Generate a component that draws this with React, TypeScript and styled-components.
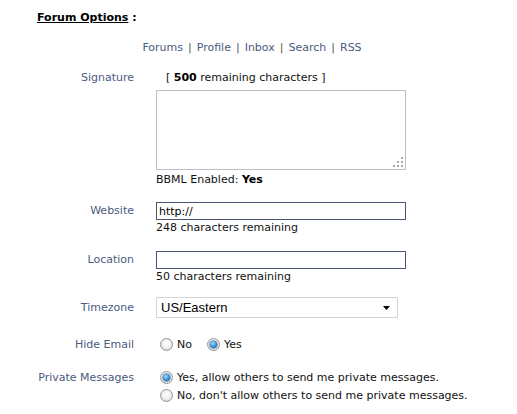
import React from "react";
import styled, { createGlobalStyle } from "styled-components";

const Global = createGlobalStyle`
  html, body { margin: 0; padding: 0; background: #fff; }
  body { font-family: "DejaVu Sans", Tahoma, Verdana, sans-serif; font-size: 11px; color: #111; }
`;

const Page = styled.div`
  width: 517px;
  padding-top: 10px;
`;

const Title = styled.div`
  padding-left: 37px;
  line-height: 15px;
  font-weight: bold;
  color: #000;
  span { text-decoration: underline; }
`;

const Nav = styled.nav`
  width: 504px;
  margin-top: 15px;
  line-height: 15px;
  text-align: center;
  color: #444;
`;

const NavLink = styled.a`
  color: #4b5a7e;
  text-decoration: none;
`;

const Sep = styled.span`
  color: #555;
  margin: 0 5px;
`;

const Row = styled.div<{ $top: number }>`
  display: flex;
  align-items: flex-start;
  column-gap: 22px;
  margin-top: ${(p) => p.$top}px;
`;

const Label = styled.div<{ $h: number }>`
  width: 134px;
  flex: none;
  text-align: right;
  line-height: ${(p) => p.$h}px;
  color: #4b5a7e;
  white-space: nowrap;
`;

const Value = styled.div`
  display: flex;
  flex-direction: column;
`;

const Line = styled.div<{ $indent?: number }>`
  line-height: 15px;
  padding-left: ${(p) => p.$indent ?? 0}px;
  white-space: nowrap;
  b { font-weight: bold; color: #000; }
`;

const AreaWrap = styled.div`
  position: relative;
  margin-top: 5px;
  margin-bottom: 2px;
  width: 250px;
  height: 80px;
`;

const Area = styled.textarea`
  display: block;
  box-sizing: border-box;
  width: 250px;
  height: 80px;
  border: 1px solid #b9c0cb;
  resize: none;
  margin: 0;
  padding: 2px;
  font: inherit;
  outline: none;
`;

const Grip = styled.svg`
  position: absolute;
  right: 3px;
  bottom: 3px;
`;

const TextInput = styled.input`
  display: block;
  box-sizing: border-box;
  width: 250px;
  height: 18px;
  margin: 0;
  padding: 0 2px;
  border: 1px solid #4a5673;
  font-family: "DejaVu Sans", Verdana, sans-serif;
  font-size: 11px;
  color: #000;
  outline: none;
  background: #fff;
`;

const Select = styled.div`
  box-sizing: border-box;
  width: 242px;
  height: 21px;
  border: 1px solid #d3d3d3;
  border-radius: 1px;
  display: flex;
  align-items: center;
  justify-content: space-between;
  padding: 0 7px 0 4px;
  font-family: "Liberation Sans", Arial, sans-serif;
  font-size: 13px;
  color: #000;
  background: #fff;
`;

const Options = styled.div<{ $dir: "row" | "column" }>`
  display: flex;
  flex-direction: ${(p) => p.$dir};
  row-gap: 3px;
  column-gap: 15px;
  padding-left: 4px;
`;

const Option = styled.label`
  display: flex;
  align-items: center;
  gap: 4px;
  line-height: 15px;
  white-space: nowrap;
  color: #111;
`;

const Radio = styled.span<{ $on?: boolean }>`
  box-sizing: border-box;
  width: 13px;
  height: 13px;
  border-radius: 50%;
  border: 1px solid #8f9499;
  background: radial-gradient(circle at 50% 40%, #ffffff 0%, #f0f0f0 45%, #cfd1d4 100%);
  display: flex;
  align-items: center;
  justify-content: center;
  flex: none;
  &::after {
    content: "";
    display: ${(p) => (p.$on ? "block" : "none")};
    width: 7px;
    height: 7px;
    border-radius: 50%;
    background: radial-gradient(circle at 40% 35%, #a9e0ff 0%, #3f9be0 45%, #134f8e 100%);
    box-shadow: 0 0 0 0.5px #1d4f80;
  }
`;

export default function App() {
  return (
    <Page>
      <Global />
      <Title>
        <span>Forum Options</span> :
      </Title>
      <Nav>
        <NavLink href="#">Forums</NavLink>
        <Sep>|</Sep>
        <NavLink href="#">Profile</NavLink>
        <Sep>|</Sep>
        <NavLink href="#">Inbox</NavLink>
        <Sep>|</Sep>
        <NavLink href="#">Search</NavLink>
        <Sep>|</Sep>
        <NavLink href="#">RSS</NavLink>
      </Nav>

      <Row $top={15}>
        <Label $h={15}>Signature</Label>
        <Value>
          <Line $indent={10}>
            [ <b>500</b> remaining characters ]
          </Line>
          <AreaWrap>
            <Area />
            <Grip width="10" height="10" viewBox="0 0 10 10">
              <g fill="#a8a8a8">
                <rect x="8" y="0" width="2" height="2" />
                <rect x="4" y="4" width="2" height="2" />
                <rect x="8" y="4" width="2" height="2" />
                <rect x="0" y="8" width="2" height="2" />
                <rect x="4" y="8" width="2" height="2" />
                <rect x="8" y="8" width="2" height="2" />
              </g>
            </Grip>
          </AreaWrap>
          <Line>
            BBML Enabled: <b>Yes</b>
          </Line>
        </Value>
      </Row>

      <Row $top={15}>
        <Label $h={18}>Website</Label>
        <Value>
          <TextInput defaultValue="http://" />
          <Line>248 characters remaining</Line>
        </Value>
      </Row>

      <Row $top={16}>
        <Label $h={18}>Location</Label>
        <Value>
          <TextInput defaultValue="" />
          <Line>50 characters remaining</Line>
        </Value>
      </Row>

      <Row $top={13}>
        <Label $h={21}>Timezone</Label>
        <Value>
          <Select>
            <span>US/Eastern</span>
            <svg width="7" height="4" viewBox="0 0 7 4">
              <path d="M0 0H7L3.5 4Z" fill="#000" />
            </svg>
          </Select>
        </Value>
      </Row>

      <Row $top={19}>
        <Label $h={15}>Hide Email</Label>
        <Options $dir="row">
          <Option>
            <Radio /> No
          </Option>
          <Option>
            <Radio $on /> Yes
          </Option>
        </Options>
      </Row>

      <Row $top={18}>
        <Label $h={15}>Private Messages</Label>
        <Options $dir="column">
          <Option>
            <Radio $on /> Yes, allow others to send me private messages.
          </Option>
          <Option>
            <Radio /> No, don't allow others to send me private messages.
          </Option>
        </Options>
      </Row>
    </Page>
  );
}
